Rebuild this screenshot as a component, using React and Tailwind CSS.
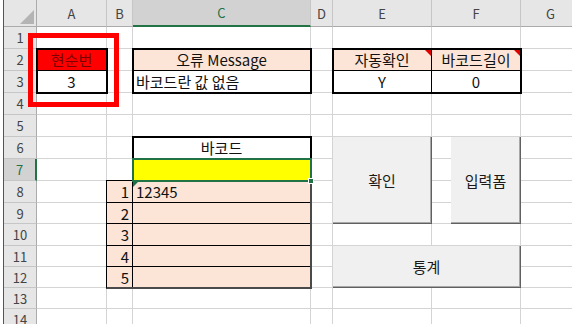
const COLS = ['A', 'B', 'C', 'D', 'E', 'F', 'G'];
const ROWS = [1, 2, 3, 4, 5, 6, 7, 8, 9, 10, 11, 12, 13, 14];

const colStart = ['col-start-1', 'col-start-2', 'col-start-3', 'col-start-4', 'col-start-5', 'col-start-6', 'col-start-7', 'col-start-8'];
const rowStart = ['row-start-1', 'row-start-2', 'row-start-3', 'row-start-4', 'row-start-5', 'row-start-6', 'row-start-7', 'row-start-8', 'row-start-9', 'row-start-10', 'row-start-11', 'row-start-12', 'row-start-13', 'row-start-14', 'row-start-15'];

const peach = 'bg-[#fce4d6]';

// cell formats; bb / br = black bottom / right border
const cells = {
  A2: { text: '현순번', bg: 'bg-[#ff0000]', color: 'text-[#7a0000]', align: 'center', bb: true },
  A3: { text: '3', align: 'center' },
  C2: { text: '오류 Message', bg: peach, align: 'center', bb: true },
  C3: { text: '바코드란 값 없음', align: 'left' },
  E2: { text: '자동확인', bg: peach, align: 'center', bb: true, br: true, note: true },
  F2: { text: '바코드길이', bg: peach, align: 'center', bb: true, note: true },
  E3: { text: 'Y', align: 'center', br: true },
  F3: { text: '0', align: 'center' },
  C6: { text: '바코드', align: 'center' },
  C7: { bg: 'bg-[#ffff00]' },
  B8: { text: '1', bg: peach, align: 'right', bb: true, br: true },
  B9: { text: '2', bg: peach, align: 'right', bb: true, br: true },
  B10: { text: '3', bg: peach, align: 'right', bb: true, br: true },
  B11: { text: '4', bg: peach, align: 'right', bb: true, br: true },
  B12: { text: '5', bg: peach, align: 'right', br: true },
  C8: { text: '12345', bg: peach, align: 'left', bb: true, warn: true },
  C9: { bg: peach, bb: true },
  C10: { bg: peach, bb: true },
  C11: { bg: peach, bb: true },
  C12: { bg: peach },
};

const alignCls = {
  center: 'justify-center',
  left: 'justify-start pl-[3px]',
  right: 'justify-end pr-[3px]',
};

function Cell({ r, c }) {
  const key = COLS[c] + r;
  const f = cells[key] || {};
  return (
    <div
      className={[
        'relative flex items-center border-r border-b text-[15px] leading-none whitespace-nowrap',
        colStart[c + 1],
        rowStart[r],
        f.br ? 'border-r-black' : 'border-r-[#d4d4d4]',
        f.bb ? 'border-b-black' : 'border-b-[#d4d4d4]',
        f.bg || 'bg-white',
        f.color || 'text-[#111]',
        alignCls[f.align || 'left'],
      ].join(' ')}
    >
      {f.text}
      {f.note && (
        <svg className="absolute top-[1px] right-0" width="6" height="6" viewBox="0 0 6 6">
          <polygon points="0,0 6,0 6,6" fill="#e00000" />
        </svg>
      )}
      {f.warn && (
        <svg className="absolute top-0 left-0" width="6" height="6" viewBox="0 0 6 6">
          <polygon points="0,0 6,0 0,6" fill="#1e7145" />
        </svg>
      )}
    </div>
  );
}

function Button({ label, className }) {
  return (
    <div
      className={`absolute flex items-center justify-center bg-[#f0f0f0] border-r border-b border-[#606060] shadow-[inset_-1px_-1px_0_#a8a8a8] text-[15px] leading-none text-[#1a1a1a] ${className}`}
    >
      {label}
    </div>
  );
}

export default function App() {
  return (
    <div className="relative w-[572px] h-[324px] overflow-hidden bg-white flex font-['Noto_Sans_CJK_KR',sans-serif]">
      <div className="w-[3px] shrink-0 bg-white" />
      <div className="w-px shrink-0 bg-[#217346]" />
      <div className="grid grid-cols-[33px_70px_26px_178px_22px_99px_89px_60px] grid-rows-[27px_22px_22px_22px_22px_22px_22px_22px_22px_21px_22px_21px_21px_21px_22px]">
        {/* corner */}
        <div className="col-start-1 row-start-1 relative bg-[#e6e6e6] border-r border-b border-[#ababab]">
          <svg className="absolute left-[16px] top-[10px]" width="14" height="14" viewBox="0 0 14 14">
            <polygon points="14,0 14,14 0,14" fill="#b4b4b4" />
          </svg>
        </div>

        {/* column headers */}
        {COLS.map((col, i) => (
          <div
            key={col}
            className={[
              'row-start-1 flex items-center justify-center border-r border-r-[#c6c6c6] text-[13px] leading-none',
              colStart[i + 1],
              col === 'C'
                ? 'bg-[#d2d2d2] text-[#217346] border-b-2 border-b-[#217346]'
                : 'bg-[#e6e6e6] text-[#444] border-b border-b-[#ababab]',
            ].join(' ')}
          >
            {col}
          </div>
        ))}

        {/* row headers + cells */}
        {ROWS.map((r) => (
          <div key={r} className="contents">
            <div
              className={[
                'col-start-1 flex items-center justify-center border-b border-b-[#c6c6c6] text-[13px] leading-none',
                rowStart[r],
                r === 7
                  ? 'bg-[#d2d2d2] text-[#217346] border-r-2 border-r-[#217346]'
                  : 'bg-[#e6e6e6] text-[#444] border-r border-r-[#ababab]',
              ].join(' ')}
            >
              {r}
            </div>
            {COLS.map((col, c) => (
              <Cell key={col} r={r} c={c} />
            ))}
          </div>
        ))}

        {/* thick borders */}
        <div className="col-start-2 row-start-3 row-span-2 -m-px border-2 border-black z-10 pointer-events-none" />
        <div className="col-start-4 row-start-3 row-span-2 -m-px border-2 border-black z-10 pointer-events-none" />
        <div className="col-start-6 col-span-2 row-start-3 row-span-2 -m-px border-2 border-black z-10 pointer-events-none" />
        <div className="col-start-4 row-start-7 row-span-2 -m-px border-t-2 border-x-2 border-black z-10 pointer-events-none" />
        <div className="col-start-3 col-span-2 row-start-9 row-span-5 -m-px border-l border-t border-l-black border-t-black border-r-2 border-b-2 border-r-[#4a4a4a] border-b-[#4a4a4a] z-10 pointer-events-none" />

        {/* selection on C7 */}
        <div className="col-start-4 row-start-8 relative -m-px border-2 border-[#217346] z-20 pointer-events-none">
          <div className="absolute -right-[4px] -bottom-[4px] w-[6px] h-[6px] bg-[#217346] border border-white" />
        </div>
      </div>

      {/* form buttons */}
      <Button label="확인" className="left-[333px] top-[137px] w-[99px] h-[87px]" />
      <Button label="입력폼" className="left-[451px] top-[137px] w-[70px] h-[87px]" />
      <Button label="통계" className="left-[333px] top-[246px] w-[188px] h-[42px]" />

      {/* red highlight box */}
      <div className="absolute left-[28px] top-[33px] w-[91px] h-[74px] border-[5px] border-[#ff0000] z-30" />
    </div>
  );
}
